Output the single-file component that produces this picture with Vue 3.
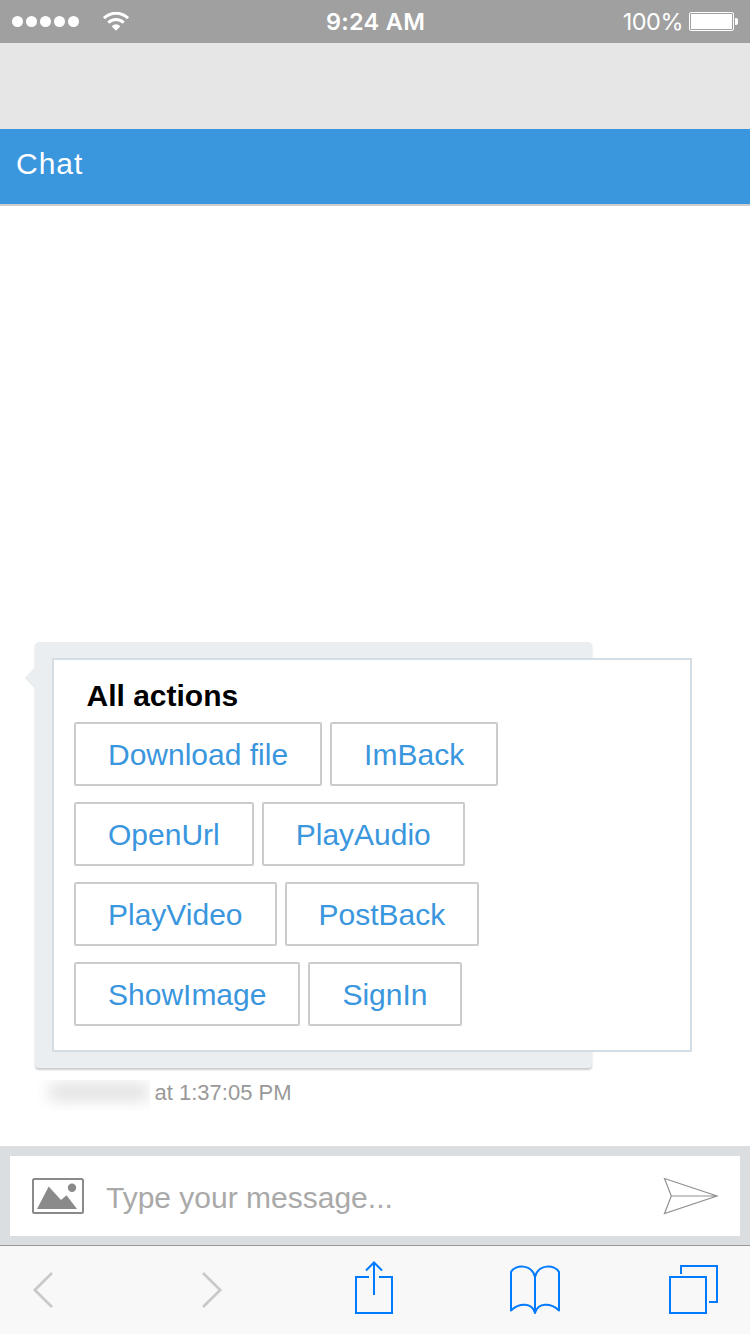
<script setup>
const actionRows = [
  ['Download file', 'ImBack'],
  ['OpenUrl', 'PlayAudio'],
  ['PlayVideo', 'PostBack'],
  ['ShowImage', 'SignIn'],
]
</script>

<template>
  <div class="screen">
    <div class="status">
      <div class="status-left">
        <span class="signal"><i v-for="n in 5" :key="n"></i></span>
        <svg class="wifi" width="26" height="19" viewBox="0 0 26 19">
          <g fill="none" stroke="#fff">
            <path d="M1 6.2A17 17 0 0 1 25 6.2" stroke-width="3" />
            <path d="M5.3 10.8A10.8 10.8 0 0 1 20.7 10.8" stroke-width="3" />
          </g>
          <path d="M8.6 14.2Q13 10.2 17.4 14.2L13 18.7Z" fill="#fff" />
        </svg>
      </div>
      <div class="clock">9:24 AM</div>
      <div class="status-right">
        <span class="percent">100%</span>
        <span class="battery"><i></i></span>
        <span class="cap"></span>
      </div>
    </div>

    <div class="strip"></div>
    <header class="header">Chat</header>

    <main class="chat">
      <div class="bubble">
        <svg class="tail" width="12" height="24" viewBox="0 0 12 24">
          <path d="M12 0V24L0.5 12Z" fill="#eaeef1" />
        </svg>
        <div class="card">
          <h2>All actions</h2>
          <div v-for="(row, i) in actionRows" :key="i" class="row">
            <button v-for="label in row" :key="label">{{ label }}</button>
          </div>
        </div>
      </div>
      <div class="meta">
        <span class="sender"><i></i></span>
        <span class="time">at 1:37:05 PM</span>
      </div>
    </main>

    <div class="composer">
      <div class="field">
        <svg class="image-icon" width="52" height="36" viewBox="0 0 52 36">
          <rect x="1" y="1" width="50" height="34" rx="1.5" fill="none" stroke="#8a8a8a" stroke-width="2" />
          <path d="M5 31L16.7 8.5L29 22L34.5 17.3L45 31Z" fill="#8a8a8a" />
          <circle cx="40" cy="9.8" r="4.2" fill="#8a8a8a" />
        </svg>
        <span class="placeholder">Type your message...</span>
        <svg class="send" width="56" height="38" viewBox="0 0 56 38">
          <path d="M1.5 1.5L54 19L1.5 36.5L8.3 19Z M8.3 19H54" fill="none" stroke="#919191" stroke-width="1.2" />
        </svg>
      </div>
    </div>

    <nav class="toolbar">
      <svg width="750" height="88" viewBox="0 0 750 88" fill="none" stroke-width="2">
        <g stroke="#c9c9c9" stroke-width="2.7">
          <path d="M52 27L34.8 44L52 61" />
          <path d="M203 27L220.2 44L203 61" />
        </g>
        <g stroke="#007aff">
          <path d="M369 31H356V67H392V31H379" />
          <path d="M374 49V17M366 24.5L374 16.5L382 24.5" />
          <path d="M535 31V67M535 31C532 18 515 18 511 26V64.5C519 57 532 56 535 67C538 56 551 57 559 64.5V26C555 18 538 18 535 31" stroke-linejoin="round" />
          <rect x="670" y="31" width="36" height="36" />
          <path d="M681 28V20H717V56H709" />
        </g>
      </svg>
    </nav>
  </div>
</template>

<style>
body {
  margin: 0;
}
</style>

<style scoped>
.screen {
  width: 750px;
  height: 1334px;
  display: flex;
  flex-direction: column;
  overflow: hidden;
  background: #fff;
  font-family: "Liberation Sans", Arial, sans-serif;
}
.status {
  height: 43px;
  flex: none;
  display: grid;
  grid-template-columns: 1fr auto 1fr;
  align-items: center;
  background: #a0a0a0;
  color: #fff;
  font-family: Inter, "Liberation Sans", sans-serif;
  font-size: 24px;
  line-height: 43px;
}
.status-left {
  display: flex;
  align-items: center;
  padding-left: 12px;
  gap: 24px;
}
.signal {
  display: flex;
  gap: 3px;
}
.signal i {
  width: 11px;
  height: 11px;
  border-radius: 50%;
  background: #fff;
}
.wifi {
  margin-top: -1px;
}
.clock {
  padding: 0 0 0 1px;
  font-size: 23.5px;
  font-weight: 600;
  letter-spacing: 0.3px;
}
.status-right {
  display: flex;
  justify-content: flex-end;
  align-items: center;
  padding-right: 12px;
}
.percent {
  font-size: 23.5px;
  font-weight: 400;
  letter-spacing: -0.5px;
  margin-right: 6px;
}
.battery {
  box-sizing: border-box;
  width: 45px;
  height: 19px;
  padding: 1px;
  border: 1px solid #fff;
  border-radius: 2px;
  display: flex;
}
.battery i {
  flex: 1;
  background: #fff;
}
.cap {
  width: 3px;
  height: 7px;
  margin-left: 1px;
  background: #fff;
  border-radius: 0 2px 2px 0;
}
.strip {
  height: 86px;
  flex: none;
  background: #e6e6e6;
}
.header {
  box-sizing: border-box;
  height: 77px;
  flex: none;
  padding-left: 16px;
  border-bottom: 2px solid #ccc;
  background: #3a96dd;
  color: #fff;
  font-size: 30px;
  line-height: 70px;
  letter-spacing: 1px;
}
.chat {
  flex: 1;
  display: flex;
  flex-direction: column;
  justify-content: flex-end;
  padding: 0 0 36px 35px;
}
.bubble {
  position: relative;
  width: 524px;
  height: 394px;
  padding: 16px 16px 16px 17px;
  border-radius: 4px;
  background: #eaeef1;
  box-shadow: 0 2px 2px rgba(0, 0, 0, 0.2);
}
.tail {
  position: absolute;
  left: -11px;
  top: 24px;
}
.card {
  box-sizing: border-box;
  width: 640px;
  height: 394px;
  padding: 18px 20px;
  border: 2px solid #d2dde5;
  background: #fff;
}
h2 {
  margin: 0 0 8px 12.5px;
  font-size: 30px;
  line-height: 36px;
  font-weight: 700;
}
.row {
  display: flex;
  gap: 8px;
  margin-bottom: 16px;
}
button {
  box-sizing: border-box;
  height: 64px;
  padding: 2px 32px 0;
  border: 2px solid #ccc;
  border-radius: 2px;
  background: #fff;
  color: #3a96dd;
  font: 30px/58px "Liberation Sans", Arial, sans-serif;
}
.meta {
  height: 30px;
  margin-top: 12px;
  display: flex;
  color: #999;
  font-size: 22px;
  line-height: 26px;
}
.sender {
  width: 115px;
  height: 30px;
  overflow: hidden;
}
.sender i {
  display: block;
  width: 98px;
  height: 16px;
  margin: 4px 0 0 15px;
  background: #dedede;
  filter: blur(8px);
}
.time {
  margin-left: 4.5px;
}
.composer {
  height: 80px;
  flex: none;
  padding: 10px 10px 9px;
  background: #dadee1;
}
.field {
  height: 80px;
  display: flex;
  align-items: center;
  padding: 0 21px 0 22px;
  background: #fff;
}
.placeholder {
  flex: 1;
  margin: 4px 0 0 22px;
  color: #a9a9a9;
  font-size: 30px;
}
.toolbar {
  height: 88px;
  flex: none;
  border-top: 1px solid #999;
  background: #f8f8f8;
}
.toolbar svg {
  display: block;
}
</style>
